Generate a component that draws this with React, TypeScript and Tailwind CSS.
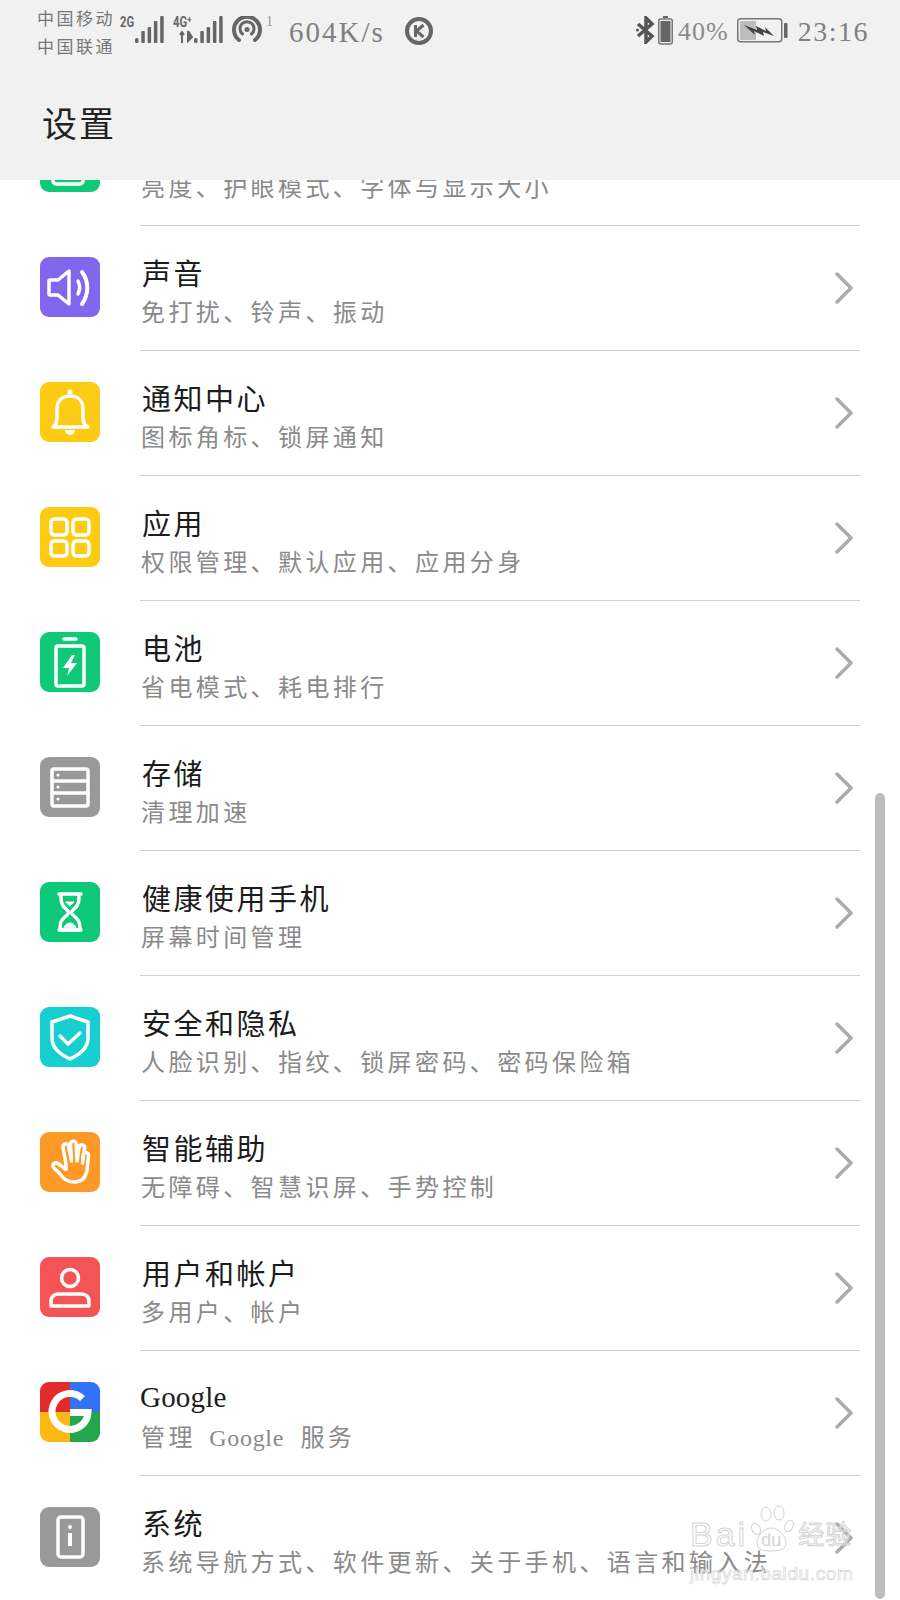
import type { ReactNode } from "react";

type Row = {
  title: string;
  sub: ReactNode;
  bg: string;
  icon: ReactNode;
  latinTitle?: boolean;
};

const FONT = "[font-family:'Liberation_Serif','Noto_Sans_CJK_SC',serif]";

function Glyph({ children }: { children: ReactNode }) {
  return (
    <svg
      viewBox="0 0 60 60"
      className="h-[60px] w-[60px]"
      fill="none"
      stroke="#fff"
      strokeWidth="3.5"
      strokeLinecap="round"
      strokeLinejoin="round"
    >
      {children}
    </svg>
  );
}

const rows: Row[] = [
  {
    title: "声音",
    sub: "免打扰、铃声、振动",
    bg: "bg-[#8266ee]",
    icon: (
      <Glyph>
        <path d="M10 23h8l11-9v33l-11-9h-8a1 1 0 0 1-1-1V24a1 1 0 0 1 1-1z" />
        <path d="M38 24c2 4 2 9 0 13" />
        <path d="M42 15c7 9 7 22 0 32" strokeWidth="4" />
      </Glyph>
    ),
  },
  {
    title: "通知中心",
    sub: "图标角标、锁屏通知",
    bg: "bg-[#fecb14]",
    icon: (
      <Glyph>
        <path d="M13 45c3-2 4-5 4-9v-9c0-8 5-13 13-13s13 5 13 13v9c0 4 1 7 5 9z" />
        <circle cx="30" cy="10" r="2.5" fill="#fff" stroke="none" />
        <path d="M25 48h10a5 5 0 0 1-10 0z" fill="#fff" stroke="none" />
      </Glyph>
    ),
  },
  {
    title: "应用",
    sub: "权限管理、默认应用、应用分身",
    bg: "bg-[#fecb14]",
    icon: (
      <Glyph>
        <rect x="11" y="12" width="16" height="16" rx="3.5" />
        <rect x="33" y="12" width="16" height="16" rx="3.5" />
        <rect x="11" y="34" width="16" height="15" rx="3.5" />
        <rect x="33" y="34" width="16" height="15" rx="3.5" />
      </Glyph>
    ),
  },
  {
    title: "电池",
    sub: "省电模式、耗电排行",
    bg: "bg-[#0fc878]",
    icon: (
      <Glyph>
        <rect x="16" y="14" width="28" height="40" rx="2" />
        <path d="M24 7h12" />
        <path d="M32 23L23 36h6l-2 8 10-13h-6l4-8z" fill="#fff" stroke="none" />
      </Glyph>
    ),
  },
  {
    title: "存储",
    sub: "清理加速",
    bg: "bg-[#999999]",
    icon: (
      <Glyph>
        <rect x="12" y="12" width="36" height="37" rx="2" />
        <path d="M12 24h36M12 36h36" />
        <circle cx="18" cy="18" r="1.5" fill="#fff" stroke="none" />
        <circle cx="18" cy="30" r="1.5" fill="#fff" stroke="none" />
        <circle cx="18" cy="42" r="1.5" fill="#fff" stroke="none" />
      </Glyph>
    ),
  },
  {
    title: "健康使用手机",
    sub: "屏幕时间管理",
    bg: "bg-[#0cc878]",
    icon: (
      <Glyph>
        <path d="M19 12h22" />
        <path d="M19 48h22" />
        <path d="M21 12c0 8 0 11 6 16 2 2 2 3 0 5-6 5-7 7-7 15h20c0-8-1-10-7-15-2-2-2-3 0-5 6-5 6-8 6-16" />
        <path d="M26 20h8l-4 4z" fill="#fff" strokeWidth="1" />
        <path d="M24 45c2-3 4-4 6-4s4 1 6 4z" fill="#fff" strokeWidth="1" />
      </Glyph>
    ),
  },
  {
    title: "安全和隐私",
    sub: "人脸识别、指纹、锁屏密码、密码保险箱",
    bg: "bg-[#18cfcf]",
    icon: (
      <Glyph>
        <path d="M30 9l18 6v16c0 10-7 16-18 21-11-5-18-11-18-21V15z" />
        <path d="M20 29l8 8 12-11" />
      </Glyph>
    ),
  },
  {
    title: "智能辅助",
    sub: "无障碍、智慧识屏、手势控制",
    bg: "bg-[#fe9826]",
    icon: (
      <Glyph>
        <path d="M26 32l-3-17a2.8 2.8 0 0 1 5.5-1l3 15-1-17a2.8 2.8 0 0 1 5.6 0l1 17 2-14a2.8 2.8 0 0 1 5.5 1l-2 15 .5-8a2.7 2.7 0 0 1 5.4.4L47 38c-1 7-5 12-13 12-7 0-10-3-14-8l-6-6a3 3 0 0 1 4-4.5l8 6z" />
      </Glyph>
    ),
  },
  {
    title: "用户和帐户",
    sub: "多用户、帐户",
    bg: "bg-[#f45456]",
    icon: (
      <Glyph>
        <circle cx="30" cy="21" r="8.5" />
        <path d="M18 37h24a7 7 0 0 1 7 7v5H11v-5a7 7 0 0 1 7-7z" />
      </Glyph>
    ),
  },
  {
    title: "Google",
    sub: (
      <>
        管理 <span className="ml-[4px] mr-[7px] tracking-[0.7px]">Google</span> 服务
      </>
    ),
    bg: "bg-white",
    latinTitle: true,
    icon: (
      <svg viewBox="0 0 60 60" className="h-[60px] w-[60px]">
        <rect width="30" height="30" fill="#e32b2b" />
        <rect x="30" width="30" height="30" fill="#3273f6" />
        <rect y="30" width="30" height="30" fill="#fdb913" />
        <rect x="30" y="30" width="30" height="30" fill="#22a64e" />
        <path d="M42.5 16.5A18 18 0 1 0 48 30.5H30" fill="none" stroke="#fff" strokeWidth="7" />
      </svg>
    ),
  },
  {
    title: "系统",
    sub: "系统导航方式、软件更新、关于手机、语言和输入法",
    bg: "bg-[#999999]",
    icon: (
      <Glyph>
        <rect x="18" y="10" width="25" height="40" rx="3" />
        <path d="M30 26v13" strokeWidth="4" strokeLinecap="butt" />
        <circle cx="30" cy="20" r="2" fill="#fff" stroke="none" />
      </Glyph>
    ),
  },
];

function Chevron() {
  return (
    <svg viewBox="0 0 18 32" className="h-[32px] w-[18px]" fill="none" stroke="#ababab" strokeWidth="3.5" strokeLinecap="round" strokeLinejoin="round">
      <path d="M2 2l14 14L2 30" />
    </svg>
  );
}

function SettingRow({ row }: { row: Row }) {
  return (
    <div className="flex h-[125px] items-stretch pl-10 pr-[40px]">
      <div className="mr-10 flex w-[60px] shrink-0 items-center pb-[3px]">
        <div className={`h-[60px] w-[60px] overflow-hidden rounded-[9px] ${row.bg}`}>{row.icon}</div>
      </div>
      <div className="flex min-w-0 flex-1 items-center justify-between border-b border-[#cfcfcf] pr-[7px]">
        <div className="min-w-0 pt-[9px]">
          {row.latinTitle ? (
            <div className="h-[41px] text-[29px] leading-[37px] tracking-[0.2px] text-[#1c1c1c]">{row.title}</div>
          ) : (
            <div className="h-[41px] pl-[2px] text-[29px] leading-[42px] tracking-[2.5px] text-[#1c1c1c]">{row.title}</div>
          )}
          <div className="whitespace-nowrap pl-px text-[24px] leading-[36px] tracking-[3.4px] text-[#8a8a8a]">
            {row.sub}
          </div>
        </div>
        <Chevron />
      </div>
    </div>
  );
}

function Bars({ className }: { className: string }) {
  return (
    <svg viewBox="0 0 29 27" className={className} fill="#666">
      <rect x="0" y="22" width="3.5" height="5" rx="1.5" />
      <rect x="6.3" y="15" width="3.5" height="12" rx="1" />
      <rect x="12.6" y="11" width="3.5" height="16" rx="1" />
      <rect x="18.9" y="5" width="3.5" height="22" rx="1" />
      <rect x="25.2" y="0" width="3.5" height="27" rx="1" />
    </svg>
  );
}

function StatusBar() {
  return (
    <div className="flex h-[62px] items-start justify-between pl-[37px] pr-[31px] text-[#707070]">
      <div className="flex items-start">
        <div className="mt-[6px] w-[83px] whitespace-nowrap text-[17px] leading-[28px] tracking-[2.5px] text-[#777]">
          <div>中国移动</div>
          <div>中国联通</div>
        </div>
        <div className="relative mt-[16px] h-[27px] w-[44px]">
          <span className="absolute left-0 top-[-1px] origin-left scale-x-75 font-['Roboto',sans-serif] text-[15px] font-bold leading-[15px] text-[#666]">2G</span>
          <Bars className="absolute left-[15px] top-0 h-[27px] w-[29px]" />
        </div>
        <div className="relative ml-[9px] mt-[16px] h-[27px] w-[50px]">
          <span className="absolute left-0 top-[-1px] origin-left scale-x-75 whitespace-nowrap font-['Roboto',sans-serif] text-[15px] font-bold leading-[15px] text-[#666]">4G⁺</span>
          <svg viewBox="0 0 14 12" className="absolute left-[6px] top-[15px] h-[12px] w-[14px]" stroke="#666" strokeWidth="2" fill="#666">
            <path d="M3 12V2M1 4l2-3 2 3" fill="none" />
            <path d="M9 0v10l4-4z" />
          </svg>
          <Bars className="absolute left-[21px] top-0 h-[27px] w-[29px]" />
        </div>
        <svg viewBox="0 0 30 26" className="ml-[9px] mt-[16px] h-[26px] w-[30px]" fill="none" stroke="#666" strokeWidth="4" strokeLinecap="round">
          <path d="M7 24A13 13 0 1 1 23 24" />
          <path d="M10.5 18a7 7 0 1 1 9 0" strokeWidth="3" />
          <circle cx="15" cy="13.5" r="2.5" fill="#666" stroke="none" />
        </svg>
        <span className="ml-[4px] mt-[15px] text-[14px] leading-[14px] text-[#999]">1</span>
        <span className="ml-[16px] mt-[14px] whitespace-nowrap text-[29px] leading-[36px] tracking-[2px] text-[#808080]">604K/s</span>
        <svg viewBox="0 0 30 28" className="ml-[19px] mt-[17px] h-[28px] w-[30px]" fill="none" stroke="#666" strokeWidth="4">
          <circle cx="15" cy="14" r="12" />
          <path d="M11.5 8v12M19.5 8l-7 6 7 6" strokeWidth="3" />
        </svg>
      </div>
      <div className="flex items-start">
        <svg viewBox="0 0 20 28" className="mt-[16px] h-[28px] w-[20px]" fill="none" stroke="#555" strokeWidth="3.5">
          <path d="M2 8l14 12-6 6V2l6 6L2 20" />
          <circle cx="1.5" cy="14" r="1.5" fill="#555" stroke="none" />
        </svg>
        <svg viewBox="0 0 15 29" className="ml-[2px] mt-[16px] h-[29px] w-[15px]" fill="#666">
          <rect x="5" y="0" width="5" height="2" />
          <rect x="0.75" y="3" width="13.5" height="25" rx="2" fill="none" stroke="#777" strokeWidth="1.5" />
          <rect x="2.5" y="5" width="10" height="21" />
        </svg>
        <span className="ml-[5px] mt-[14px] text-[26px] leading-[36px] tracking-[1px] text-[#8a8a8a]">40%</span>
        <svg viewBox="0 0 51 25" className="ml-[8px] mt-[18px] h-[25px] w-[51px]">
          <rect x="0.75" y="0.75" width="44" height="23" rx="3" fill="none" stroke="#777" strokeWidth="1.5" />
          <rect x="3" y="3" width="16" height="19" fill="#bdbdbd" />
          <path d="M7 7l13 5-1-4 10 5-1-4 9 9-11-4 1 4-10-5 1 4z" fill="#444" />
          <rect x="47" y="5" width="3.5" height="15" rx="1" fill="#666" />
        </svg>
        <span className="ml-[10px] mt-[14px] whitespace-nowrap text-[28px] leading-[36px] tracking-[1.5px] text-[#808080]">23:16</span>
      </div>
    </div>
  );
}

function Watermark() {
  const hollow = "text-white/40 [-webkit-text-stroke:1px_#d4d4d4]";
  return (
    <div className="absolute left-[690px] top-[1503px] w-[170px] font-['Liberation_Sans','Noto_Sans_CJK_SC',sans-serif]">
      <div className="flex h-[50px] items-end">
        <span className={`text-[34px] leading-[38px] tracking-[3px] ${hollow}`}>Bai</span>
        <div className="relative h-[48px] w-[47px] shrink-0">
          <svg viewBox="0 0 47 48" className="h-[48px] w-[47px]" fill="rgba(255,255,255,0.4)" stroke="#d4d4d4" strokeWidth="1">
            <ellipse cx="8" cy="24" rx="4" ry="6" transform="rotate(-25 8 24)" />
            <ellipse cx="18" cy="9" rx="5" ry="7" />
            <ellipse cx="31" cy="8" rx="5" ry="7" />
            <ellipse cx="41" cy="21" rx="4" ry="6" transform="rotate(25 41 21)" />
            <path d="M23 23c-7 0-14 8-14 15 0 6 5 8 14 8s15-2 15-8c0-7-8-15-15-15z" />
          </svg>
          <span className="absolute left-[13px] top-[25px] text-[18px] leading-[20px] text-[#d4d4d4]">du</span>
        </div>
        <span className={`ml-[3px] whitespace-nowrap text-[26px] leading-[36px] tracking-[1px] ${hollow}`}>经验</span>
      </div>
      <div className="mt-[11px] whitespace-nowrap text-[19px] leading-[20px] tracking-[0.6px] text-white/40 [-webkit-text-stroke:0.7px_#d4d4d4]">
        jingyan.baidu.com
      </div>
    </div>
  );
}

export default function App() {
  return (
    <div className={`relative h-[1600px] w-[900px] overflow-hidden bg-white ${FONT}`}>
      <header className="relative z-10 h-[180px] bg-[#f1f1f1]">
        <StatusBar />
        <h1 className="pl-[42px] pt-[39px] text-[35px] leading-[50px] tracking-[2px] text-[#222]">设置</h1>
      </header>
      <div className="-mt-[79px]">
        <SettingRow
          row={{
            title: "显示",
            sub: "亮度、护眼模式、字体与显示大小",
            bg: "bg-[#0fc878]",
            icon: (
              <Glyph>
                <path d="M13 44v5a3 3 0 0 0 3 3h24a3 3 0 0 0 3-3v-5" />
              </Glyph>
            ),
          }}
        />
        {rows.map((row) => (
          <SettingRow key={row.title} row={row} />
        ))}
      </div>
      <div className="absolute left-[875px] top-[793px] h-[806px] w-[10px] rounded-full bg-[#bdbdbd]" />
      <Watermark />
    </div>
  );
}
